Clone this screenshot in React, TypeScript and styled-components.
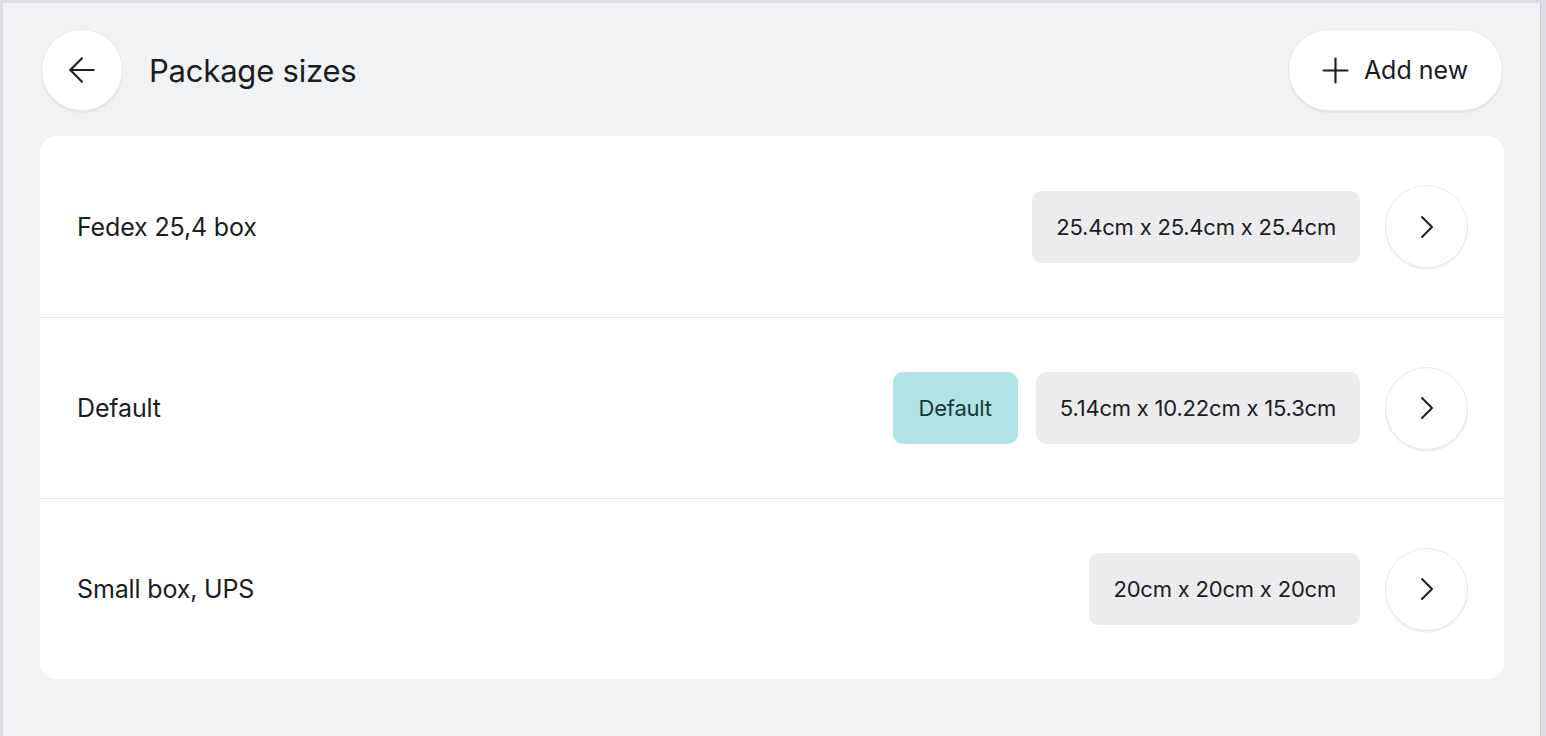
import React from "react";
import styled, { createGlobalStyle } from "styled-components";
import { ArrowLeft, ChevronRight, Plus } from "lucide-react";

const Global = createGlobalStyle`
  html, body { margin: 0; padding: 0; background: #dddde7; }
  body { font-family: Inter, "Noto Sans", sans-serif; color: #1a1d21; }
  * { box-sizing: border-box; }
`;

const Frame = styled.div`
  margin: 3px 5px 0 3px;
  min-height: 733px;
  background: #f1f2f4;
  border-right: 1px solid #c9c9d2;
  padding: 26px 36px 40px 37px;
  display: flex;
  flex-direction: column;
  gap: 25px;
`;

const Header = styled.header`
  display: flex;
  align-items: center;
  justify-content: space-between;
  height: 82px;
`;

const TitleGroup = styled.div`
  display: flex;
  align-items: center;
  gap: 26px;
  padding-left: 1px;
`;

const CircleButton = styled.button<{ $size?: number }>`
  width: ${(p) => p.$size ?? 82}px;
  height: ${(p) => p.$size ?? 82}px;
  border-radius: 50%;
  background: #fff;
  border: 1px solid #e8e9eb;
  box-shadow: 0 2px 1px rgba(0, 0, 0, 0.06);
  display: flex;
  align-items: center;
  justify-content: center;
  color: #1a1d21;
  padding: 0;
  flex-shrink: 0;
  cursor: pointer;
`;

const Title = styled.h1`
  margin: 0;
  font-size: 31px;
  font-weight: 400;
  letter-spacing: -0.2px;
`;

const AddButton = styled.button`
  height: 82px;
  width: 215px;
  border-radius: 41px;
  background: #fff;
  border: 1px solid #e8e9eb;
  box-shadow: 0 2px 1px rgba(0, 0, 0, 0.06);
  display: flex;
  align-items: center;
  justify-content: center;
  gap: 8px;
  font-family: Inter, sans-serif;
  font-size: 25px;
  color: #1a1d21;
  padding: 0 8px 0 0;
  margin-right: 1px;
  cursor: pointer;
`;

const Card = styled.section`
  background: #fff;
  border-radius: 16px;
  overflow: hidden;
`;

const Row = styled.div`
  height: 181px;
  display: flex;
  align-items: center;
  padding: 0 36px 0 37px;
  & + & {
    border-top: 1px solid #e4e5e8;
  }
`;

const Name = styled.div`
  flex: 1;
  font-size: 25px;
  letter-spacing: -0.15px;
`;

const Tag = styled.div<{ $tone?: "gray" | "teal" }>`
  height: 72px;
  display: flex;
  align-items: center;
  padding: 0 ${(p) => (p.$tone === "teal" ? 26 : 24)}px;
  border-radius: 10px;
  font-size: 22px;
  letter-spacing: -0.2px;
  background: ${(p) => (p.$tone === "teal" ? "#b2e3e4" : "#ececee")};
  color: ${(p) => (p.$tone === "teal" ? "#17393a" : "#1a1d21")};
  margin-right: ${(p) => (p.$tone === "teal" ? 18 : 25)}px;
`;

const rows = [
  { name: "Fedex 25,4 box", size: "25.4cm x 25.4cm x 25.4cm" },
  { name: "Default", size: "5.14cm x 10.22cm x 15.3cm", isDefault: true },
  { name: "Small box, UPS", size: "20cm x 20cm x 20cm" },
];

export default function App() {
  return (
    <>
      <Global />
      <Frame>
        <Header>
          <TitleGroup>
            <CircleButton aria-label="Back">
              <ArrowLeft size={40} strokeWidth={1.25} />
            </CircleButton>
            <Title>Package sizes</Title>
          </TitleGroup>
          <AddButton>
            <Plus size={41} strokeWidth={1.25} />
            Add new
          </AddButton>
        </Header>
        <Card>
          {rows.map((r) => (
            <Row key={r.name}>
              <Name>{r.name}</Name>
              {r.isDefault && <Tag $tone="teal">Default</Tag>}
              <Tag>{r.size}</Tag>
              <CircleButton $size={83} aria-label="Open">
                <ChevronRight size={40} strokeWidth={1.2} />
              </CircleButton>
            </Row>
          ))}
        </Card>
      </Frame>
    </>
  );
}
